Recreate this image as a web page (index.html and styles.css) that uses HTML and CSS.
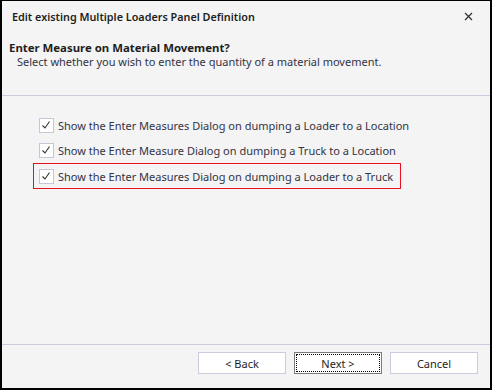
FILE: index.html
```html
<!DOCTYPE html>
<html lang="en">
<head>
    <meta charset="UTF-8">
    <title>Edit existing Multiple Loaders Panel Definition</title>
    <link rel="stylesheet" href="styles.css">
</head>
<body>
    <div class="dialog">
        <div class="titlebar">
            <span class="title">Edit existing Multiple Loaders Panel Definition</span>
            <span class="close">
                <svg width="9" height="9" viewBox="0 0 9 9">
                    <path d="M1 1 L8 8 M8 1 L1 8" stroke="#333" stroke-width="1.3" fill="none"/>
                </svg>
            </span>
        </div>

        <div class="header">
            <div class="heading">Enter Measure on Material Movement?</div>
            <div class="subtitle">Select whether you wish to enter the quantity of a material movement.</div>
        </div>

        <div class="content">
            <label class="row">
                <span class="box"><svg width="14" height="14" viewBox="0 0 14 14"><path d="M3.5 7.5 L6 10 L10.5 3.5" stroke="#333" stroke-width="1.1" fill="none"/></svg></span>
                Show the Enter Measures Dialog on dumping a Loader to a Location
            </label>
            <label class="row">
                <span class="box"><svg width="14" height="14" viewBox="0 0 14 14"><path d="M3.5 7.5 L6 10 L10.5 3.5" stroke="#333" stroke-width="1.1" fill="none"/></svg></span>
                Show the Enter Measure Dialog on dumping a Truck to a Location
            </label>
            <label class="row highlight">
                <span class="box"><svg width="14" height="14" viewBox="0 0 14 14"><path d="M3.5 7.5 L6 10 L10.5 3.5" stroke="#333" stroke-width="1.1" fill="none"/></svg></span>
                Show the Enter Measures Dialog on dumping a Loader to a Truck
            </label>
        </div>

        <div class="footer">
            <button class="btn">&lt; Back</button>
            <button class="btn focused">Next &gt;</button>
            <button class="btn">Cancel</button>
        </div>
    </div>
</body>
</html>
```

FILE: styles.css
```css
body {
    margin: 0;
    font-family: "Noto Sans", "Open Sans", sans-serif;
    font-size: 11px;
}
.dialog {
    width: 492px;
    height: 390px;
    box-sizing: border-box;
    border: 2px solid #000;
    border-top-width: 1px;
    background: #f4f4f4;
    display: flex;
    flex-direction: column;
}
.titlebar {
    height: 30px;
    display: flex;
    align-items: center;
    justify-content: space-between;
    padding: 0 17px 0 10px;
}
.title {
    font-weight: 600;
    font-size: 10.8px;
    color: #1e1e1e;
}
.close {
    display: flex;
}
.header {
    padding: 9px 0 0 7px;
    height: 55px;
    border-bottom: 1px solid #cdcbe0;
}
.heading {
    font-weight: bold;
    font-size: 11.4px;
    line-height: 15px;
    color: #1e1e1e;
}
.subtitle {
    padding-left: 8px;
    line-height: 14px;
    color: #333344;
}
.content {
    flex: 1;
    display: flex;
    flex-direction: column;
    align-items: flex-start;
    gap: 1px;
    padding: 17px 0 0 31px;
}
.row {
    height: 24px;
    display: flex;
    align-items: center;
    gap: 4px;
    padding: 0 7px 0 6px;
    color: #333344;
}
.row.highlight {
    border: 1px solid #e81123;
    padding-left: 5px;
}
.box {
    width: 13px;
    height: 13px;
    border: 1px solid #c6c6d8;
    background: #fff;
    display: flex;
}
.box svg {
    margin: -1px 0 0 -1px;
}
.footer {
    height: 44px;
    box-sizing: border-box;
    border-top: 1px solid #cdcbe0;
    padding: 7px 12px 0 0;
    display: flex;
    justify-content: flex-end;
    gap: 8px;
}
.btn {
    width: 88px;
    height: 22px;
    background: #fff;
    border: 1px solid #cdcbe0;
    font-family: inherit;
    font-size: 11px;
    color: #1e1e1e;
    padding: 0;
}
.btn.focused {
    border-color: #7a7a7a;
    outline: 1px dotted #000;
    outline-offset: -3px;
}
```
